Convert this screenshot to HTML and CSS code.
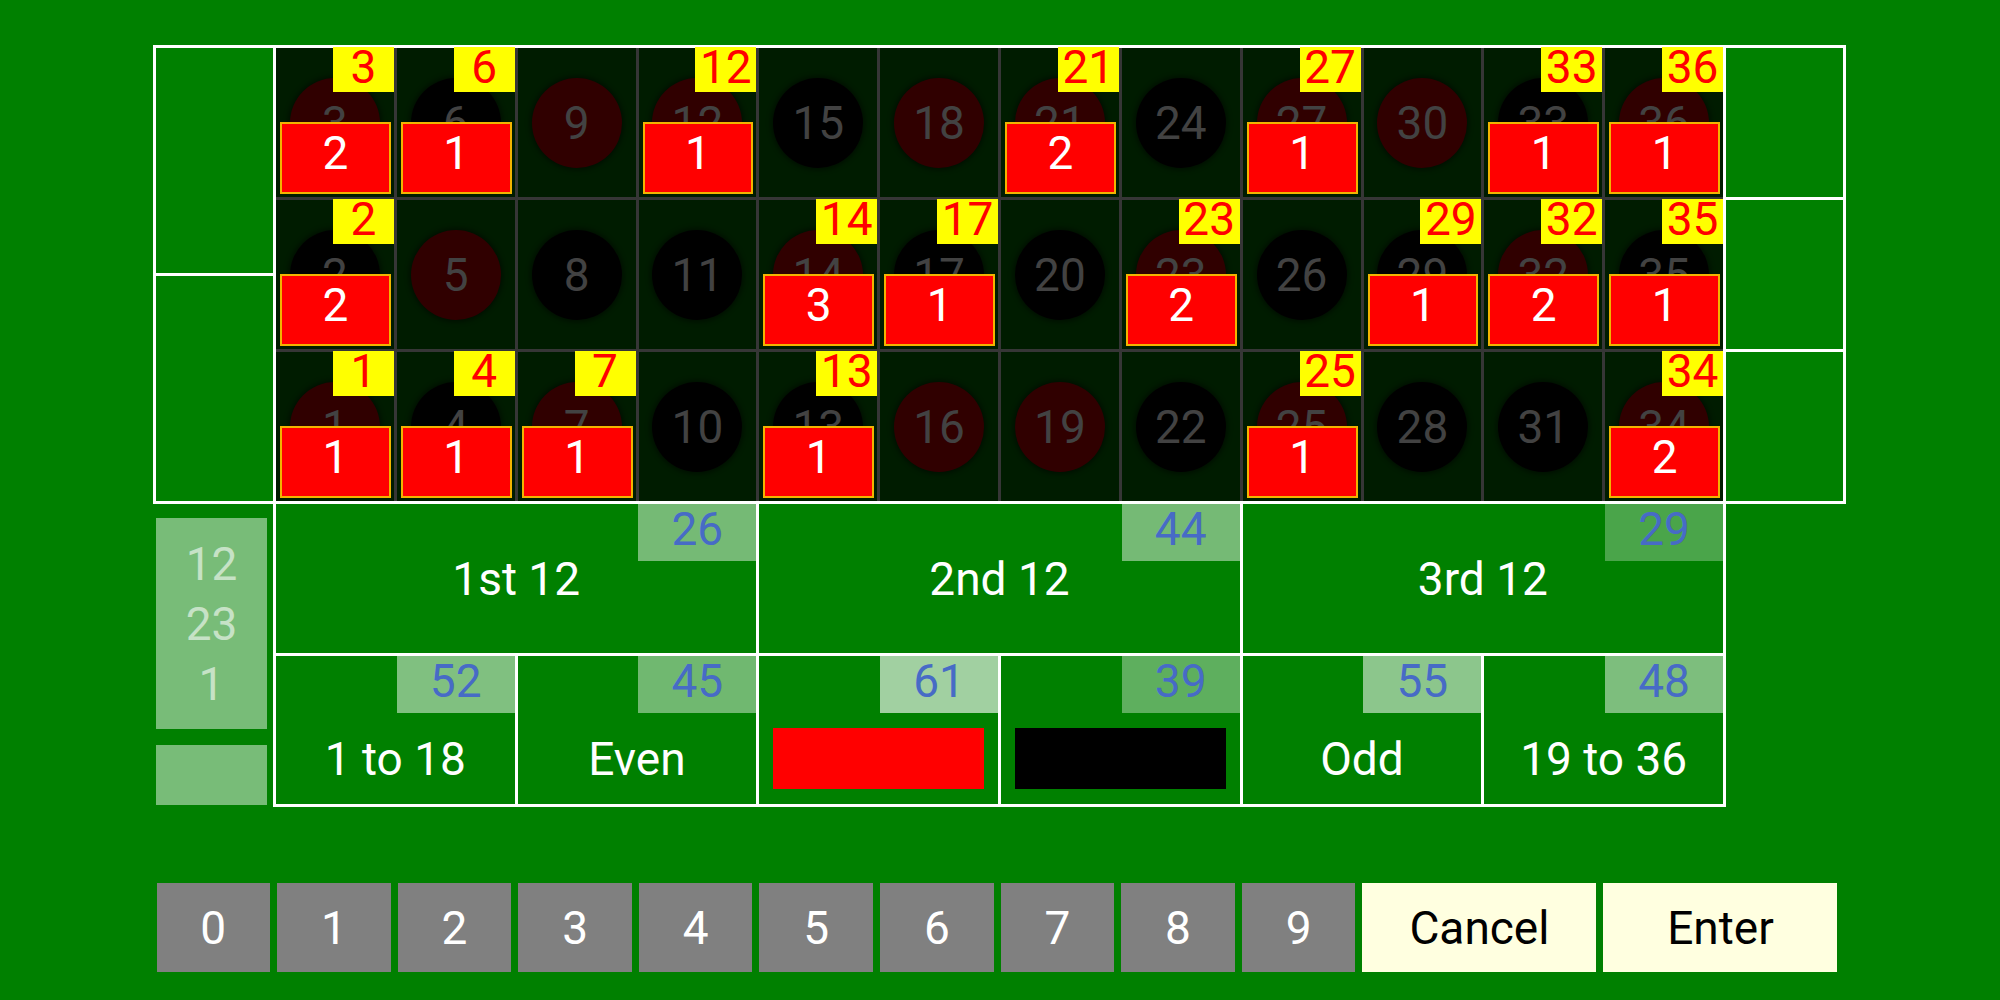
FILE: index.html
```html
<!DOCTYPE html>
<html lang="en">
<head>
    <meta charset="UTF-8">
    <meta name="viewport" content="width=device-width, initial-scale=1.0">
    <title>Roulette Table</title>
    <link rel="stylesheet" href="styles.css">
</head>
<body>
    <div class="board">
        <!-- Number layout -->
        <div class="layout">
            <div class="zero">
                <div class="zero-cell"></div>
                <div class="zero-cell"></div>
            </div>
            <div class="numbers" id="numbers"></div>
            <div class="columns">
                <div class="column-cell"></div>
                <div class="column-cell"></div>
                <div class="column-cell"></div>
            </div>
        </div>

        <!-- Outside bets -->
        <div class="lower">
            <div class="side">
                <div class="history">
                    <span>12</span>
                    <span>23</span>
                    <span>1</span>
                </div>
                <div class="history-blank"></div>
            </div>
            <div class="outside">
                <div class="dozens" id="dozens"></div>
                <div class="evens" id="evens"></div>
            </div>
        </div>

        <!-- Keypad -->
        <div class="keypad" id="keypad"></div>
    </div>

    <script>
        const reds = [1, 3, 5, 7, 9, 12, 14, 16, 18, 19, 21, 23, 25, 27, 30, 32, 34, 36];
        const chips = {
            3: 2, 6: 1, 12: 1, 21: 2, 27: 1, 33: 1, 36: 1,
            2: 2, 14: 3, 17: 1, 23: 2, 29: 1, 32: 2, 35: 1,
            1: 1, 4: 1, 7: 1, 13: 1, 25: 1, 34: 2
        };

        const dozens = [
            { label: "1st 12", count: 26, shade: 0.46 },
            { label: "2nd 12", count: 44, shade: 0.46 },
            { label: "3rd 12", count: 29, shade: 0.29 }
        ];
        const evens = [
            { label: "1 to 18", count: 52, shade: 0.5 },
            { label: "Even", count: 45, shade: 0.44 },
            { swatch: "red", count: 61, shade: 0.63 },
            { swatch: "black", count: 39, shade: 0.37 },
            { label: "Odd", count: 55, shade: 0.55 },
            { label: "19 to 36", count: 48, shade: 0.49 }
        ];

        function buildNumbers() {
            let html = "";
            for (let row = 0; row < 3; row++) {
                for (let col = 0; col < 12; col++) {
                    const n = col * 3 + (3 - row);
                    const colour = reds.includes(n) ? "red" : "black";
                    html += `<div class="num"><div class="ball ${colour}">${n}</div>`;
                    if (chips[n]) {
                        html += `<div class="tag">${n}</div><div class="chip">${chips[n]}</div>`;
                    }
                    html += `</div>`;
                }
            }
            document.getElementById("numbers").innerHTML = html;
        }

        function betCell(bet) {
            const inner = bet.swatch
                ? `<div class="swatch ${bet.swatch}"></div>`
                : `<span>${bet.label}</span>`;
            return `<div class="bet">
                <div class="count" style="background: rgba(255, 255, 255, ${bet.shade})">${bet.count}</div>
                ${inner}
            </div>`;
        }

        function buildKeypad() {
            let html = "";
            for (let i = 0; i < 10; i++) {
                html += `<div class="key">${i}</div>`;
            }
            html += `<div class="key wide">Cancel</div><div class="key wide">Enter</div>`;
            document.getElementById("keypad").innerHTML = html;
        }

        buildNumbers();
        document.getElementById("dozens").innerHTML = dozens.map(betCell).join("");
        document.getElementById("evens").innerHTML = evens.map(betCell).join("");
        buildKeypad();
    </script>
</body>
</html>
```

FILE: styles.css
```css
body {
    margin: 0;
    background-color: #008000;
    font-family: Roboto, "Liberation Sans", sans-serif;
    font-size: 46px;
}
.board {
    width: 1693px;
    margin-left: 153px;
    padding-top: 45px;
}

/* number layout */
.layout {
    display: flex;
    height: 453px;
    border: 3px solid #fff;
}
.zero, .columns {
    width: 117px;
    display: flex;
    flex-direction: column;
}
.zero {
    border-right: 3px solid #fff;
}
.columns {
    border-left: 3px solid #fff;
}
.zero-cell, .column-cell {
    flex: 1;
}
.zero-cell + .zero-cell, .column-cell + .column-cell {
    border-top: 3px solid #fff;
}
.numbers {
    width: 1447px;
    display: grid;
    grid-template-columns: repeat(12, 1fr);
    grid-template-rows: repeat(3, 1fr);
    gap: 3px;
    background: #363636;
}
.num {
    position: relative;
    background: #001c00;
    display: flex;
    align-items: center;
    justify-content: center;
}
.ball {
    width: 90px;
    height: 90px;
    border-radius: 50%;
    display: flex;
    align-items: center;
    justify-content: center;
    color: #424242;
    box-shadow: 0 0 5px 2px rgba(0, 0, 0, 0.45);
}
.ball.red {
    background: #300000;
}
.ball.black {
    background: #000;
}
.tag {
    position: absolute;
    top: -1px;
    right: 0;
    width: 61px;
    height: 45px;
    line-height: 40px;
    text-align: center;
    background: #ff0;
    color: #f00;
}
.chip {
    position: absolute;
    left: 4px;
    right: 3px;
    bottom: 3px;
    height: 72px;
    box-sizing: border-box;
    padding-bottom: 10px;
    background: #f00;
    border: 2px solid #f2b400;
    color: #fff;
    display: flex;
    align-items: center;
    justify-content: center;
}

/* outside bets */
.lower {
    display: flex;
}
.side {
    width: 111px;
    margin-right: 6px;
    padding: 14px 0 0 3px;
}
.history {
    height: 211px;
    background: rgba(255, 255, 255, 0.47);
    color: #c6e2c6;
    line-height: 60px;
    display: flex;
    flex-direction: column;
    align-items: center;
    justify-content: center;
}
.history-blank {
    margin-top: 16px;
    height: 60px;
    background: rgba(255, 255, 255, 0.47);
}
.outside {
    width: 1447px;
    padding: 0 3px 3px;
    display: grid;
    grid-template-rows: 149px 148px;
    gap: 3px;
    background: #fff;
}
.dozens, .evens {
    display: grid;
    gap: 3px;
}
.dozens {
    grid-template-columns: repeat(3, 1fr);
}
.evens {
    grid-template-columns: repeat(6, 1fr);
}
.bet {
    position: relative;
    background: #008000;
    color: #fff;
    display: flex;
    align-items: center;
    justify-content: center;
}
.evens .bet {
    padding-top: 57px;
}
.count {
    position: absolute;
    top: 0;
    right: 0;
    width: 118px;
    height: 57px;
    line-height: 50px;
    text-align: center;
    color: #476bc6;
}
.swatch {
    width: calc(100% - 28px);
    height: 61px;
}
.swatch.red {
    background: #f00;
}
.swatch.black {
    background: #000;
}

/* keypad */
.keypad {
    display: flex;
    margin-top: 76px;
    height: 89px;
}
.key {
    width: 113.6px;
    margin: 0 3.5px;
    background: #808080;
    color: #fff;
    display: flex;
    align-items: center;
    justify-content: center;
}
.key.wide {
    width: 234px;
    background: #ffffe0;
    color: #000;
}
```
